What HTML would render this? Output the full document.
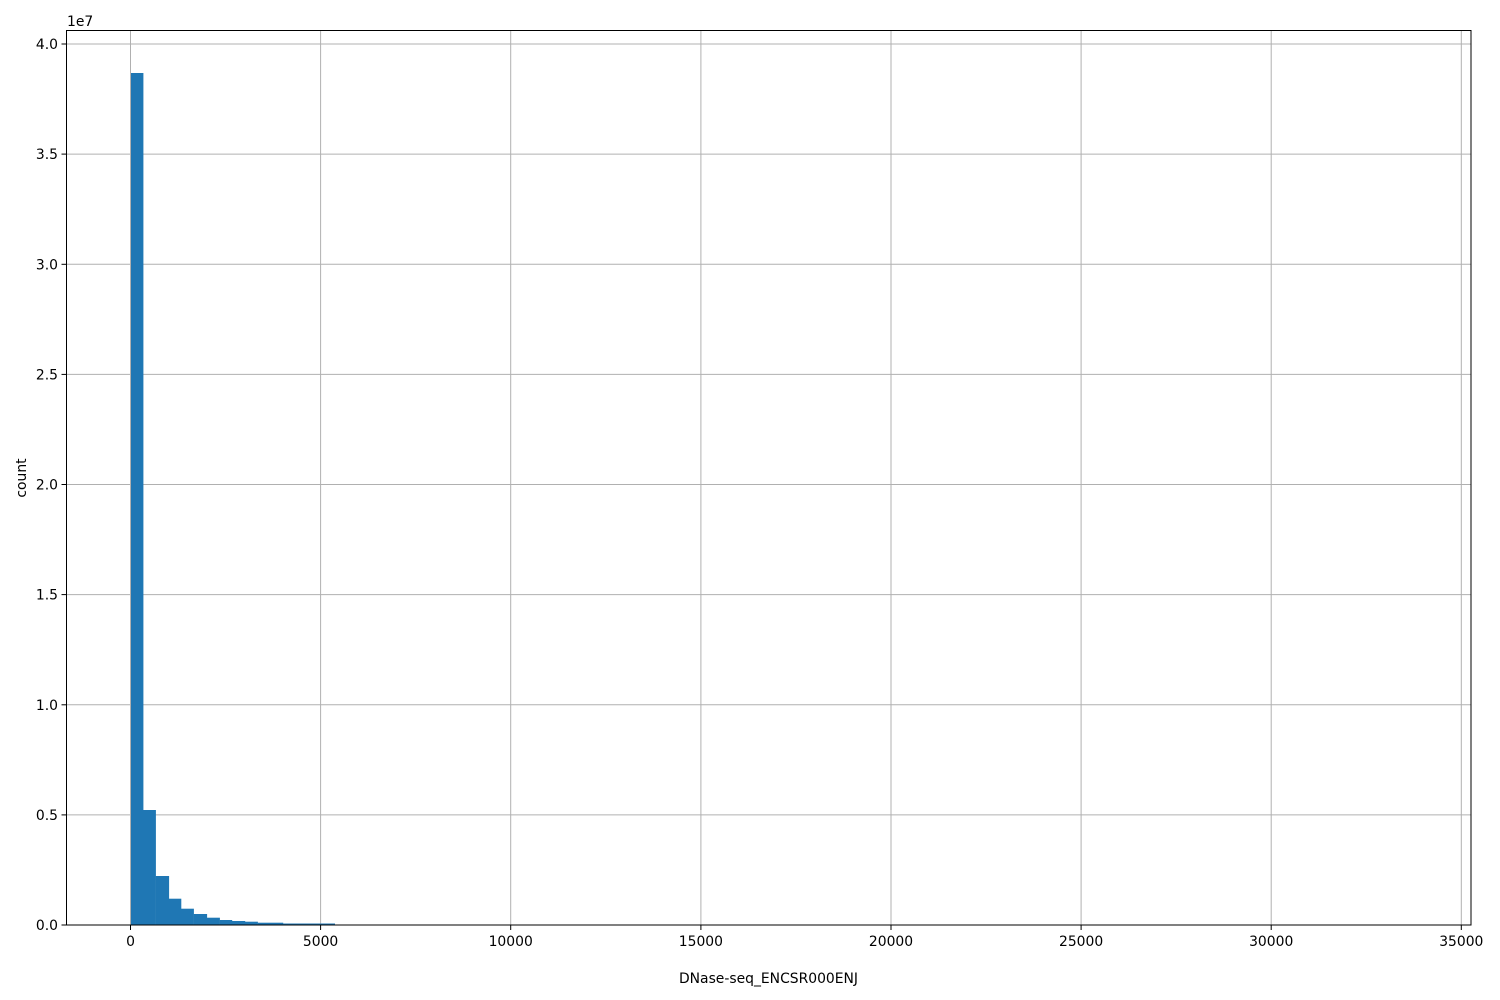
<!DOCTYPE html>
<html><head><meta charset="utf-8"><style>
html,body{margin:0;padding:0;background:#fff;}
svg{display:block;}
text{font-family:"DejaVu Sans","Liberation Sans",sans-serif;font-size:13.9px;fill:#000;}
</style></head><body>
<svg width="1500" height="1000" viewBox="0 0 1500 1000" xmlns="http://www.w3.org/2000/svg">
<g stroke="#b0b0b0" stroke-width="1">
<line x1="130.5" y1="30.5" x2="130.5" y2="925"/>
<line x1="320.6" y1="30.5" x2="320.6" y2="925"/>
<line x1="510.7" y1="30.5" x2="510.7" y2="925"/>
<line x1="700.9" y1="30.5" x2="700.9" y2="925"/>
<line x1="891" y1="30.5" x2="891" y2="925"/>
<line x1="1081.1" y1="30.5" x2="1081.1" y2="925"/>
<line x1="1271.2" y1="30.5" x2="1271.2" y2="925"/>
<line x1="1461.3" y1="30.5" x2="1461.3" y2="925"/>
<line x1="66.5" y1="814.9" x2="1471" y2="814.9"/>
<line x1="66.5" y1="704.8" x2="1471" y2="704.8"/>
<line x1="66.5" y1="594.6" x2="1471" y2="594.6"/>
<line x1="66.5" y1="484.5" x2="1471" y2="484.5"/>
<line x1="66.5" y1="374.4" x2="1471" y2="374.4"/>
<line x1="66.5" y1="264.3" x2="1471" y2="264.3"/>
<line x1="66.5" y1="154.1" x2="1471" y2="154.1"/>
<line x1="66.5" y1="44" x2="1471" y2="44"/>
</g>
<g fill="#1f77b4">
<rect x="131" y="73" width="12.4" height="852"/>
<rect x="143" y="810" width="12.9" height="115"/>
<rect x="155.7" y="876" width="13.4" height="49"/>
<rect x="169" y="898.7" width="12.3" height="26.3"/>
<rect x="181" y="908.7" width="12.9" height="16.3"/>
<rect x="193.7" y="914" width="13.4" height="11"/>
<rect x="207" y="917.7" width="12.9" height="7.3"/>
<rect x="219.7" y="920" width="12.5" height="5"/>
<rect x="232" y="921" width="13.2" height="4"/>
<rect x="245" y="921.7" width="12.9" height="3.3"/>
<rect x="257.7" y="922.7" width="25.5" height="2.3"/>
<rect x="283" y="923.5" width="52" height="1.5"/>
</g>
<rect x="66.5" y="30.5" width="1404.5" height="894.5" fill="none" stroke="#000" stroke-width="1"/>
<g stroke="#000" stroke-width="1">
<line x1="130.5" y1="925" x2="130.5" y2="930"/>
<line x1="320.6" y1="925" x2="320.6" y2="930"/>
<line x1="510.7" y1="925" x2="510.7" y2="930"/>
<line x1="700.9" y1="925" x2="700.9" y2="930"/>
<line x1="891" y1="925" x2="891" y2="930"/>
<line x1="1081.1" y1="925" x2="1081.1" y2="930"/>
<line x1="1271.2" y1="925" x2="1271.2" y2="930"/>
<line x1="1461.3" y1="925" x2="1461.3" y2="930"/>
<line x1="61.5" y1="925" x2="66.5" y2="925"/>
<line x1="61.5" y1="814.9" x2="66.5" y2="814.9"/>
<line x1="61.5" y1="704.8" x2="66.5" y2="704.8"/>
<line x1="61.5" y1="594.6" x2="66.5" y2="594.6"/>
<line x1="61.5" y1="484.5" x2="66.5" y2="484.5"/>
<line x1="61.5" y1="374.4" x2="66.5" y2="374.4"/>
<line x1="61.5" y1="264.3" x2="66.5" y2="264.3"/>
<line x1="61.5" y1="154.1" x2="66.5" y2="154.1"/>
<line x1="61.5" y1="44" x2="66.5" y2="44"/>
</g>
<g text-anchor="middle">
<text x="130.5" y="946">0</text>
<text x="320.6" y="946">5000</text>
<text x="510.7" y="946">10000</text>
<text x="700.9" y="946">15000</text>
<text x="891" y="946">20000</text>
<text x="1081.1" y="946">25000</text>
<text x="1271.2" y="946">30000</text>
<text x="1461.3" y="946">35000</text>
<text x="768.5" y="983">DNase-seq_ENCSR000ENJ</text>
</g>
<g text-anchor="end">
<text x="58" y="930">0.0</text>
<text x="58" y="820">0.5</text>
<text x="58" y="710">1.0</text>
<text x="58" y="599.6">1.5</text>
<text x="58" y="489.5">2.0</text>
<text x="58" y="379.4">2.5</text>
<text x="58" y="269.3">3.0</text>
<text x="58" y="159">3.5</text>
<text x="58" y="49">4.0</text>
</g>
<text x="67" y="26">1e7</text>
<text transform="translate(26,478) rotate(-90)" text-anchor="middle">count</text>
</svg>
</body></html>
